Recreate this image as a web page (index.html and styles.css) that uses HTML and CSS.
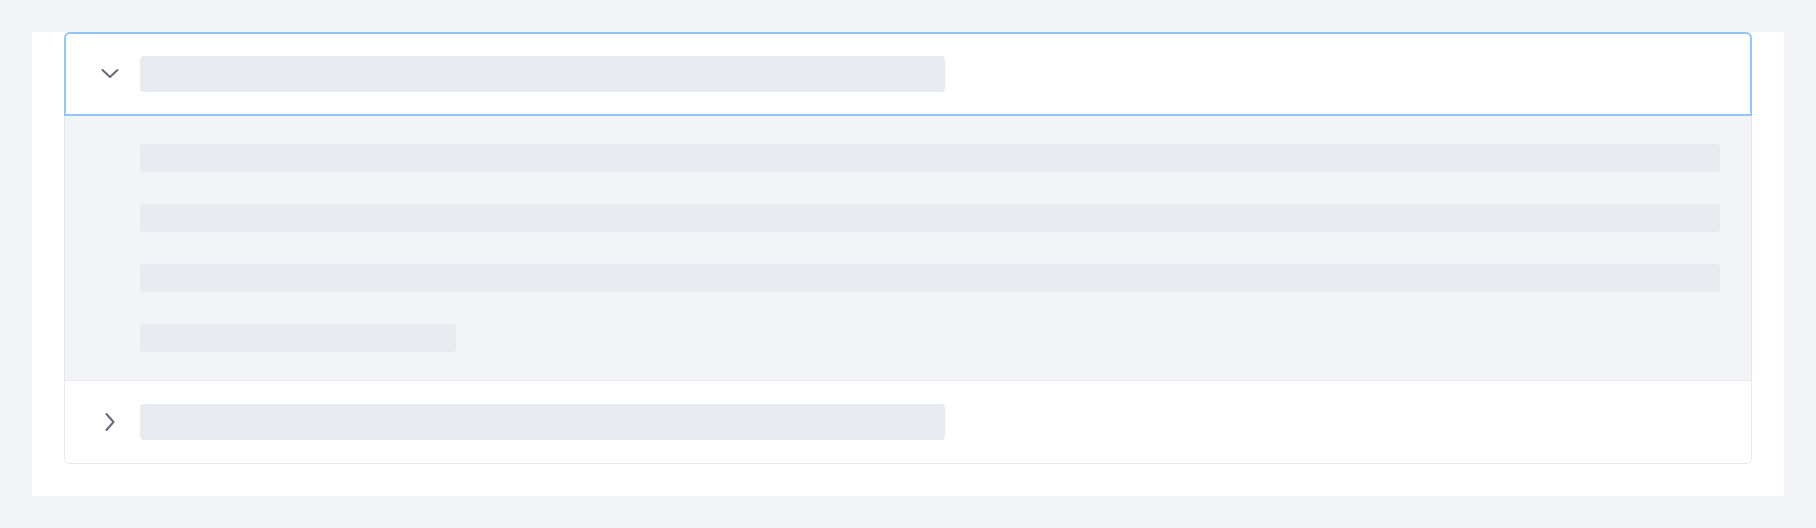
FILE: index.html
```html
<!DOCTYPE html>
<html lang="en">
<head>
<meta charset="utf-8">
<title>Accordion skeleton</title>
<link rel="stylesheet" href="styles.css">
</head>
<body>
  <div class="panel">
    <div class="card">
      <div class="acc-header acc-header--open">
        <span class="chev">
          <svg width="20" height="20" viewBox="0 0 20 20" fill="none"><path d="M2.5 6 L10 13 L17.5 6" stroke="#62687a" stroke-width="2" stroke-linecap="round" stroke-linejoin="round"/></svg>
        </span>
        <span class="bar"></span>
      </div>
      <div class="acc-body">
        <span class="line"></span>
        <span class="line"></span>
        <span class="line"></span>
        <span class="line line--short"></span>
      </div>
      <div class="acc-header">
        <span class="chev">
          <svg width="20" height="20" viewBox="0 0 20 20" fill="none"><path d="M6.5 2 L13.5 10 L6.5 18" stroke="#62687a" stroke-width="2" stroke-linecap="round" stroke-linejoin="round"/></svg>
        </span>
        <span class="bar"></span>
      </div>
    </div>
  </div>
</body>
</html>
```

FILE: styles.css
```css
* { box-sizing: border-box; }
html, body { margin: 0; }
body {
  background: #f3f4f8;
  padding: 32px;
  font-family: "Inter", "Liberation Sans", sans-serif;
}
.panel {
  background: #ffffff;
  padding: 0 32px 32px;
}
.card {
  border: 1px solid #e5e7eb;
  border-radius: 6px;
  background: #ffffff;
}
.acc-header {
  display: flex;
  align-items: center;
  gap: 20px;
  height: 82px;
  padding-left: 35px;
  background: #ffffff;
  border-radius: 0 0 6px 6px;
}
.acc-header--open {
  height: 84px;
  margin: -1px -1px 0 -1px;
  border: 2px solid #93c5fd;
  border-radius: 6px 6px 0 0;
  padding-left: 34px;
}
.chev {
  width: 20px;
  height: 20px;
  display: flex;
}
.bar {
  width: 805px;
  height: 36px;
  background: #e7eaee;
  border-radius: 4px;
}
.acc-body {
  background: #f3f4f8;
  border-bottom: 1px solid #e5e7eb;
  padding: 28px 31px 28px 75px;
  display: flex;
  flex-direction: column;
  gap: 32px;
}
.line {
  display: block;
  height: 28px;
  background: #e7eaee;
  border-radius: 4px;
}
.line--short { width: 316px; }
```
